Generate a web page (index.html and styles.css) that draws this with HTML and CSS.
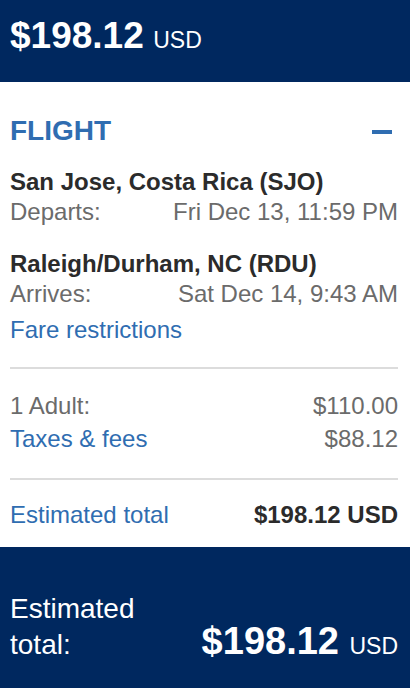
FILE: index.html
```html
<!DOCTYPE html>
<html>
<head>
<meta charset="utf-8">
<link rel="stylesheet" href="styles.css">
</head>
<body>
<header class="top">
  <span class="amount">$198.12</span> <span class="cur">USD</span>
</header>
<main class="card">
  <div class="section-head">
    <h2 class="title">FLIGHT</h2>
    <span class="collapse" aria-label="collapse"></span>
  </div>
  <div class="leg">
    <div class="city">San Jose, Costa Rica (SJO)</div>
    <div class="row"><span>Departs:</span><span>Fri Dec 13, 11:59 PM</span></div>
  </div>
  <div class="leg second">
    <div class="city">Raleigh/Durham, NC (RDU)</div>
    <div class="row"><span>Arrives:</span><span>Sat Dec 14, 9:43 AM</span></div>
  </div>
  <a class="link fare">Fare restrictions</a>
  <hr class="divider first">
  <div class="prices">
    <div class="row"><span>1 Adult:</span><span>$110.00</span></div>
    <div class="row"><a class="link">Taxes &amp; fees</a><span>$88.12</span></div>
  </div>
  <hr class="divider second-div">
  <div class="row total"><a class="link">Estimated total</a><span class="strong">$198.12 USD</span></div>
</main>
<footer class="bottom">
  <div class="bottom-label">Estimated<br>total:</div>
  <div class="bottom-price"><span class="amount big">$198.12</span> <span class="cur wide">USD</span></div>
</footer>
</body>
</html>
```
FILE: styles.css
```css
* { box-sizing: border-box; }
html, body { margin: 0; padding: 0; }
body {
  font-family: "Liberation Sans", Arial, sans-serif;
  background: #fff;
  width: 410px;
  height: 688px;
  display: flex;
  flex-direction: column;
  overflow: hidden;
}
.top {
  background: #00285f;
  color: #fff;
  height: 82px;
  flex: none;
  padding: 16px 10px 0;
  line-height: 40px;
}
.amount {
  font-weight: bold;
  font-size: 37px;
}
.amount.big { font-size: 38px; }
.cur {
  font-size: 23px;
  margin-left: 5px;
}
.cur.wide { margin-left: 6px; }
.card {
  flex: 1;
  padding: 32px 12px 0 10px;
}
.section-head {
  display: flex;
  justify-content: space-between;
  align-items: center;
  height: 34px;
}
.title {
  margin: 0;
  font-size: 28px;
  line-height: 34px;
  color: #2f6db1;
  font-weight: bold;
}
.collapse {
  width: 20px;
  height: 4px;
  background: #2f6db1;
  margin-right: 6px;
  margin-top: 2px;
}
.leg { margin-top: 19px; }
.leg.second { margin-top: 22px; }
.city {
  font-weight: bold;
  font-size: 24px;
  color: #2b2b2b;
  line-height: 30px;
}
.row {
  display: flex;
  justify-content: space-between;
  font-size: 24px;
  color: #6b6b6b;
  line-height: 30px;
}
.link {
  color: #2f6db1;
  font-size: 24px;
  line-height: 30px;
}
.fare {
  display: block;
  margin-top: 6px;
}
.divider {
  border: 0;
  border-top: 2px solid #dcdcdc;
  margin: 22px 0 0;
}
.divider.second-div { margin-top: 24px; }
.prices { margin-top: 22px; }
.prices .row + .row { margin-top: 3px; }
.total { margin-top: 20px; }
.strong {
  font-weight: bold;
  color: #2b2b2b;
}
.bottom {
  background: #00285f;
  color: #fff;
  height: 141px;
  flex: none;
  display: flex;
  align-items: flex-start;
  justify-content: space-between;
  padding: 44px 12px 0 10px;
}
.bottom-label {
  font-size: 28px;
  line-height: 36px;
}
.bottom-price {
  line-height: 36px;
  margin-top: 32px;
}
```
